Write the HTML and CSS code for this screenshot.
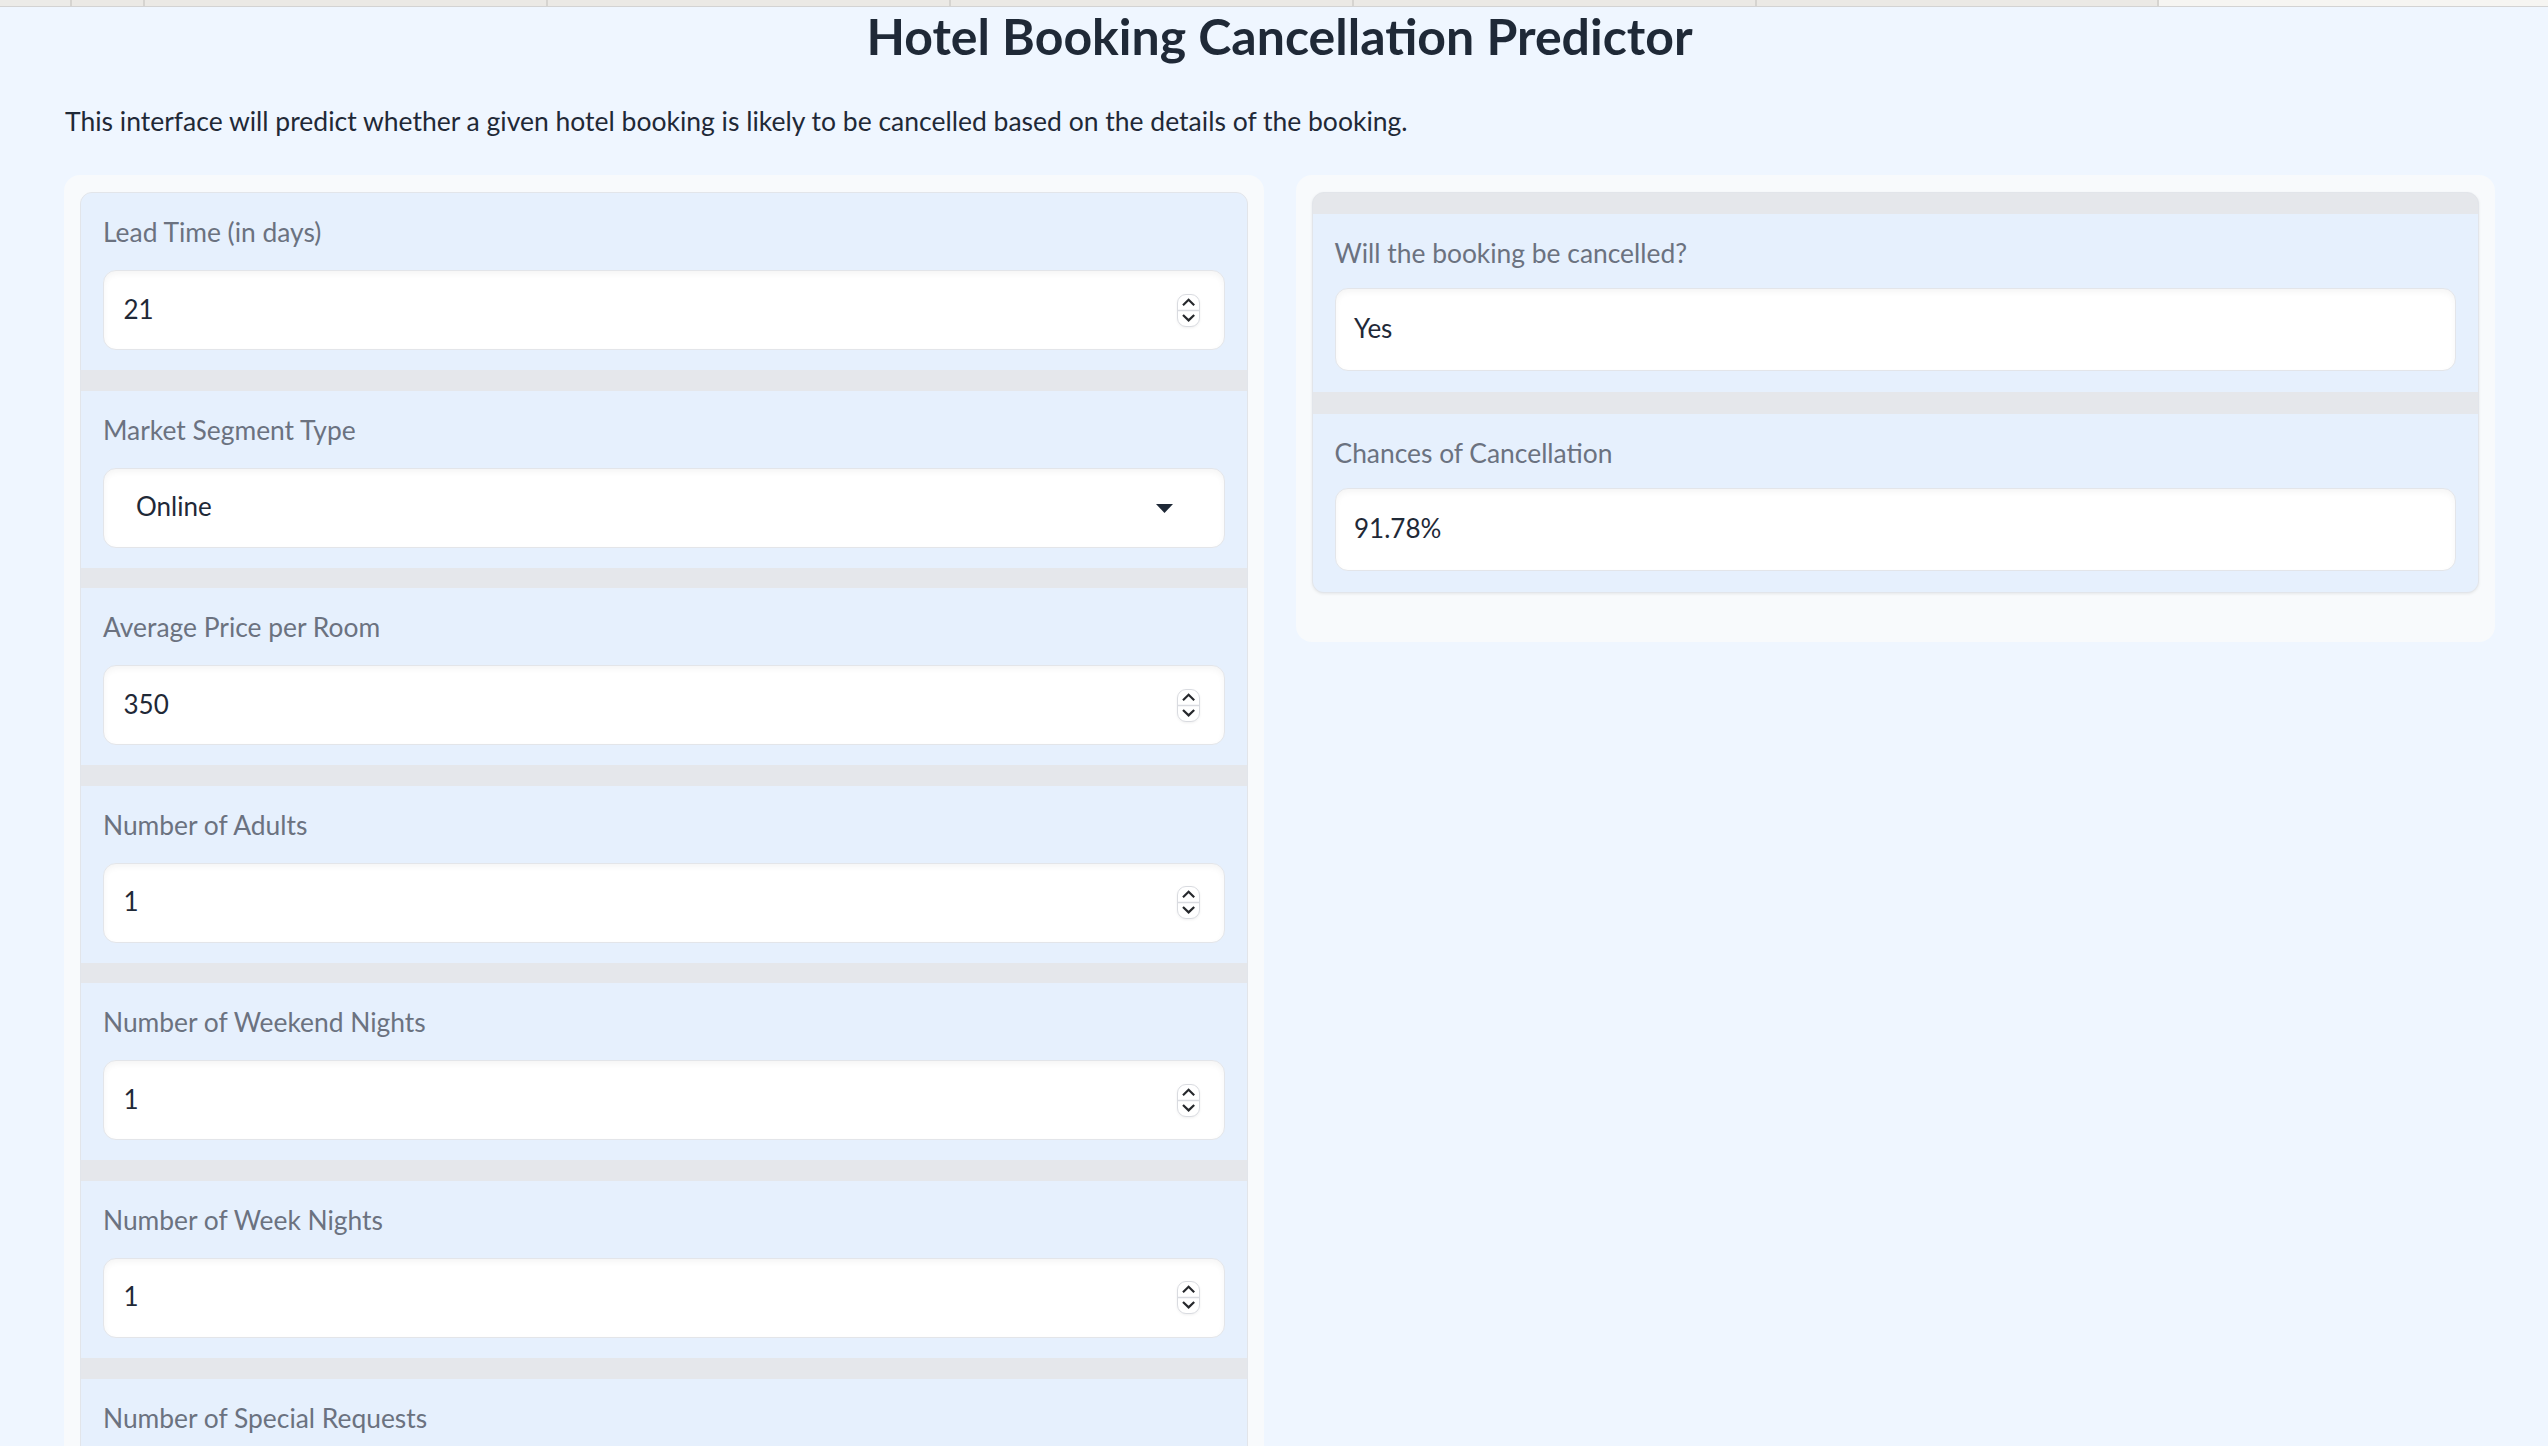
FILE: index.html
```html
<!DOCTYPE html>
<html lang="en">
<head>
<meta charset="utf-8">
<title>Hotel Booking Cancellation Predictor</title>
<link rel="stylesheet" href="styles.css">
</head>
<body>
<div class="tabstrip">
  <div class="tab tab-a"></div>
  <div class="tab tab-b"></div>
  <div class="tab tab-c"></div>
  <div class="tab tab-c"></div>
  <div class="tab tab-c"></div>
  <div class="tab tab-c"></div>
  <div class="tab tab-d"></div>
  <div class="tab tab-rest"></div>
</div>
<main class="app">
  <h1 class="title">Hotel Booking Cancellation Predictor</h1>
  <p class="desc">This interface will predict whether a given hotel booking is likely to be cancelled based on the details of the booking.</p>
  <div class="row">
    <section class="panel">
      <div class="form form-left">
        <div class="block">
          <div class="label">Lead Time (in days)</div>
          <div class="input num"><span class="value">21</span>
            <svg class="spin" width="23" height="33" viewBox="0 0 23 33"><rect x="0.5" y="0.5" width="22" height="32" rx="8.5" fill="#fff" stroke="#d9dbe0"/><line x1="1" y1="16.5" x2="22" y2="16.5" stroke="#d9dbe0" stroke-width="1.5"/><path d="M6 11.2 L11.6 5.8 L17.2 11.2" fill="none" stroke="#26282c" stroke-width="2.2"/><path d="M6 21 L11.6 26.4 L17.2 21" fill="none" stroke="#26282c" stroke-width="2.2"/></svg>
          </div>
        </div>
        <div class="block">
          <div class="label">Market Segment Type</div>
          <div class="input select"><span class="value">Online</span>
            <svg class="caret" width="17" height="9" viewBox="0 0 17 9"><path d="M0 0 H17 L8.5 9 Z" fill="#1f2937"/></svg>
          </div>
        </div>
        <div class="block">
          <div class="label">Average Price per Room</div>
          <div class="input num"><span class="value">350</span>
            <svg class="spin" width="23" height="33" viewBox="0 0 23 33"><rect x="0.5" y="0.5" width="22" height="32" rx="8.5" fill="#fff" stroke="#d9dbe0"/><line x1="1" y1="16.5" x2="22" y2="16.5" stroke="#d9dbe0" stroke-width="1.5"/><path d="M6 11.2 L11.6 5.8 L17.2 11.2" fill="none" stroke="#26282c" stroke-width="2.2"/><path d="M6 21 L11.6 26.4 L17.2 21" fill="none" stroke="#26282c" stroke-width="2.2"/></svg>
          </div>
        </div>
        <div class="block">
          <div class="label">Number of Adults</div>
          <div class="input num"><span class="value">1</span>
            <svg class="spin" width="23" height="33" viewBox="0 0 23 33"><rect x="0.5" y="0.5" width="22" height="32" rx="8.5" fill="#fff" stroke="#d9dbe0"/><line x1="1" y1="16.5" x2="22" y2="16.5" stroke="#d9dbe0" stroke-width="1.5"/><path d="M6 11.2 L11.6 5.8 L17.2 11.2" fill="none" stroke="#26282c" stroke-width="2.2"/><path d="M6 21 L11.6 26.4 L17.2 21" fill="none" stroke="#26282c" stroke-width="2.2"/></svg>
          </div>
        </div>
        <div class="block">
          <div class="label">Number of Weekend Nights</div>
          <div class="input num"><span class="value">1</span>
            <svg class="spin" width="23" height="33" viewBox="0 0 23 33"><rect x="0.5" y="0.5" width="22" height="32" rx="8.5" fill="#fff" stroke="#d9dbe0"/><line x1="1" y1="16.5" x2="22" y2="16.5" stroke="#d9dbe0" stroke-width="1.5"/><path d="M6 11.2 L11.6 5.8 L17.2 11.2" fill="none" stroke="#26282c" stroke-width="2.2"/><path d="M6 21 L11.6 26.4 L17.2 21" fill="none" stroke="#26282c" stroke-width="2.2"/></svg>
          </div>
        </div>
        <div class="block">
          <div class="label">Number of Week Nights</div>
          <div class="input num"><span class="value">1</span>
            <svg class="spin" width="23" height="33" viewBox="0 0 23 33"><rect x="0.5" y="0.5" width="22" height="32" rx="8.5" fill="#fff" stroke="#d9dbe0"/><line x1="1" y1="16.5" x2="22" y2="16.5" stroke="#d9dbe0" stroke-width="1.5"/><path d="M6 11.2 L11.6 5.8 L17.2 11.2" fill="none" stroke="#26282c" stroke-width="2.2"/><path d="M6 21 L11.6 26.4 L17.2 21" fill="none" stroke="#26282c" stroke-width="2.2"/></svg>
          </div>
        </div>
        <div class="block">
          <div class="label">Number of Special Requests</div>
          <div class="input num"><span class="value"></span>
            <svg class="spin" width="23" height="33" viewBox="0 0 23 33"><rect x="0.5" y="0.5" width="22" height="32" rx="8.5" fill="#fff" stroke="#d9dbe0"/><line x1="1" y1="16.5" x2="22" y2="16.5" stroke="#d9dbe0" stroke-width="1.5"/><path d="M6 11.2 L11.6 5.8 L17.2 11.2" fill="none" stroke="#26282c" stroke-width="2.2"/><path d="M6 21 L11.6 26.4 L17.2 21" fill="none" stroke="#26282c" stroke-width="2.2"/></svg>
          </div>
        </div>
      </div>
    </section>
    <section class="panel panel-out">
      <div class="form form-right">
        <div class="block block-out">
          <div class="label">Will the booking be cancelled?</div>
          <div class="input out"><span class="value">Yes</span></div>
        </div>
        <div class="block block-out">
          <div class="label">Chances of Cancellation</div>
          <div class="input out"><span class="value">91.78%</span></div>
        </div>
      </div>
    </section>
  </div>
</main>
</body>
</html>
```
FILE: styles.css
```css
html, body {
  margin: 0;
  padding: 0;
  overflow: hidden;
}
body {
  background: #eff6ff;
  font-family: Lato, "Noto Sans", sans-serif;
  color: #1f2937;
}

/* thin browser tab strip at the very top */
.tabstrip {
  display: flex;
  height: 6px;
  background: #ebe9e5;
  border-bottom: 1px solid #d3d3d3;
}
.tab {
  height: 6px;
  border-right: 2px solid #d6d4d0;
  box-sizing: border-box;
}
.tab-a { width: 72px; background: #ecebe8; }
.tab-b { width: 73px; }
.tab-c { width: 403px; }
.tab-d { width: 402px; }
.tab-rest { flex: 1; background: #f6f5f2; border-right: none; }

.app {
  margin-left: 64px;
  width: 2431px;
}

.title {
  margin: 0;
  font-size: 50px;
  line-height: 58px;
  font-weight: 700;
  text-align: center;
  color: #1f2937;
}

.desc {
  margin: 40px 0 0 1px;
  font-size: 26.5px;
  line-height: 32px;
  color: #1f2937;
}

.row {
  display: flex;
  align-items: flex-start;
  gap: 32px;
  margin-top: 38px;
}

.panel {
  flex: 1 1 0;
  background: #f8fafc;
  border-radius: 16px;
  padding: 17px 16px 17px 16px;
}
.panel-out {
  padding-bottom: 49px;
}

.form {
  display: flex;
  flex-direction: column;
  background: #e5e7eb;
  border: 1px solid #e2e5ea;
  border-radius: 12px;
  overflow: hidden;
}
.form-left {
  gap: 20.6px;
}
.form-right {
  gap: 22px;
  padding-top: 21px;
  box-shadow: 0 1px 3px rgba(0, 0, 0, 0.08);
}

.block {
  background: #e6f0fd;
  padding: 24px 22px 20px 22px;
}
.block-out {
  padding: 24px 22px 21px 22px;
}

.label {
  font-size: 26.4px;
  line-height: 30px;
  color: #6b7280;
  margin-bottom: 23px;
}
.block-out .label {
  margin-bottom: 20px;
}

.input {
  display: flex;
  align-items: center;
  height: 80px;
  box-sizing: border-box;
  background: #fff;
  border: 1px solid #e3e5e9;
  border-radius: 13px;
  box-shadow: inset 0 3px 6px rgba(0, 0, 0, 0.045);
  padding: 0 24px 0 19.5px;
}
.input.out {
  height: 83px;
  padding-left: 18.5px;
}
.input.select {
  padding-left: 32px;
  padding-right: 51px;
}

.value {
  flex: 1;
  font-size: 26px;
  line-height: 30px;
  color: #1f2937;
  padding-bottom: 3px;
}

.spin {
  display: block;
  flex: none;
  filter: drop-shadow(0 1px 1px rgba(0, 0, 0, 0.06));
}
.caret {
  display: block;
  flex: none;
  margin-top: 2px;
}
```
